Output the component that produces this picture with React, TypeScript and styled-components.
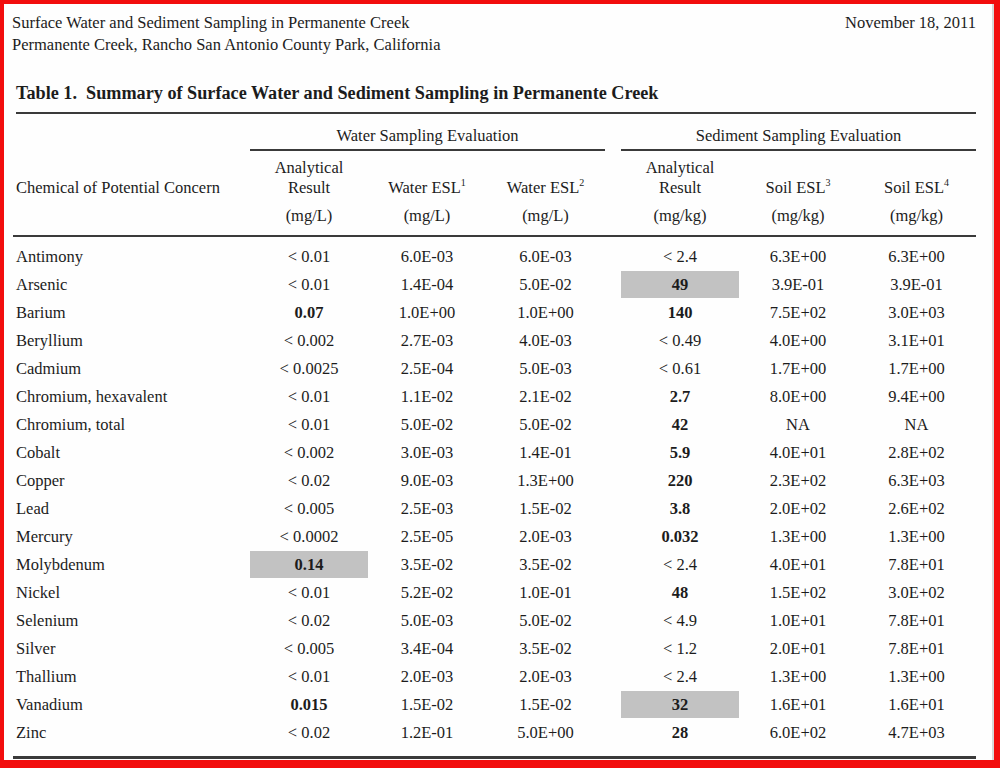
import styled, { createGlobalStyle } from "styled-components";

const GlobalStyle = createGlobalStyle`
  html, body {
    margin: 0;
    padding: 0;
    background: #ffffff;
  }
  * {
    box-sizing: border-box;
  }
`;

type Cell = { v: string; bold?: boolean; hl?: boolean };

interface RowData {
  name: string;
  water: Cell[];
  sediment: Cell[];
}

const c = (v: string, bold = false, hl = false): Cell => ({ v, bold, hl });

const rows: RowData[] = [
  { name: "Antimony", water: [c("< 0.01"), c("6.0E-03"), c("6.0E-03")], sediment: [c("< 2.4"), c("6.3E+00"), c("6.3E+00")] },
  { name: "Arsenic", water: [c("< 0.01"), c("1.4E-04"), c("5.0E-02")], sediment: [c("49", true, true), c("3.9E-01"), c("3.9E-01")] },
  { name: "Barium", water: [c("0.07", true), c("1.0E+00"), c("1.0E+00")], sediment: [c("140", true), c("7.5E+02"), c("3.0E+03")] },
  { name: "Beryllium", water: [c("< 0.002"), c("2.7E-03"), c("4.0E-03")], sediment: [c("< 0.49"), c("4.0E+00"), c("3.1E+01")] },
  { name: "Cadmium", water: [c("< 0.0025"), c("2.5E-04"), c("5.0E-03")], sediment: [c("< 0.61"), c("1.7E+00"), c("1.7E+00")] },
  { name: "Chromium, hexavalent", water: [c("< 0.01"), c("1.1E-02"), c("2.1E-02")], sediment: [c("2.7", true), c("8.0E+00"), c("9.4E+00")] },
  { name: "Chromium, total", water: [c("< 0.01"), c("5.0E-02"), c("5.0E-02")], sediment: [c("42", true), c("NA"), c("NA")] },
  { name: "Cobalt", water: [c("< 0.002"), c("3.0E-03"), c("1.4E-01")], sediment: [c("5.9", true), c("4.0E+01"), c("2.8E+02")] },
  { name: "Copper", water: [c("< 0.02"), c("9.0E-03"), c("1.3E+00")], sediment: [c("220", true), c("2.3E+02"), c("6.3E+03")] },
  { name: "Lead", water: [c("< 0.005"), c("2.5E-03"), c("1.5E-02")], sediment: [c("3.8", true), c("2.0E+02"), c("2.6E+02")] },
  { name: "Mercury", water: [c("< 0.0002"), c("2.5E-05"), c("2.0E-03")], sediment: [c("0.032", true), c("1.3E+00"), c("1.3E+00")] },
  { name: "Molybdenum", water: [c("0.14", true, true), c("3.5E-02"), c("3.5E-02")], sediment: [c("< 2.4"), c("4.0E+01"), c("7.8E+01")] },
  { name: "Nickel", water: [c("< 0.01"), c("5.2E-02"), c("1.0E-01")], sediment: [c("48", true), c("1.5E+02"), c("3.0E+02")] },
  { name: "Selenium", water: [c("< 0.02"), c("5.0E-03"), c("5.0E-02")], sediment: [c("< 4.9"), c("1.0E+01"), c("7.8E+01")] },
  { name: "Silver", water: [c("< 0.005"), c("3.4E-04"), c("3.5E-02")], sediment: [c("< 1.2"), c("2.0E+01"), c("7.8E+01")] },
  { name: "Thallium", water: [c("< 0.01"), c("2.0E-03"), c("2.0E-03")], sediment: [c("< 2.4"), c("1.3E+00"), c("1.3E+00")] },
  { name: "Vanadium", water: [c("0.015", true), c("1.5E-02"), c("1.5E-02")], sediment: [c("32", true, true), c("1.6E+01"), c("1.6E+01")] },
  { name: "Zinc", water: [c("< 0.02"), c("1.2E-01"), c("5.0E+00")], sediment: [c("28", true), c("6.0E+02"), c("4.7E+03")] },
];

const COLS = "237px 118px 118px 119px 16px 118px 118px 119px";

const Frame = styled.div`
  width: 1000px;
  height: 768px;
  border-style: solid;
  border-color: #f20d0d;
  border-width: 4px 6px 8px 4px;
  background: #fefefe;
  box-shadow: inset -2px 0 0 #d8d8d8;
  padding: 0 18px 0 9px;
  font-family: "Liberation Serif", "Times New Roman", serif;
  color: #1c1c1c;
  overflow: hidden;
`;

const DocHeader = styled.div`
  display: flex;
  justify-content: space-between;
  align-items: flex-start;
  padding: 8px 0 0 0;
  margin-left: -1px;
  font-size: 16.5px;
  line-height: 22px;
`;

const Title = styled.h1`
  margin: 26px 0 0 3px;
  font-size: 18.2px;
  font-weight: bold;
  line-height: 22px;
  padding-bottom: 8px;
  border-bottom: 2px solid #3a3a3a;
`;

const Grid = styled.div`
  display: grid;
  grid-template-columns: ${COLS};
  font-size: 16.5px;
`;

const GroupTitle = styled.div`
  grid-column: span 3;
  text-align: center;
  line-height: 20px;
  padding-top: 12px;
  padding-bottom: 3px;
  border-bottom: 2px solid #3a3a3a;
`;

const Spacer = styled.div``;

const HeadRow = styled(Grid)`
  border-bottom: 2px solid #3a3a3a;
  padding-bottom: 9px;
`;

const HeadCell = styled.div<{ $left?: boolean }>`
  display: flex;
  flex-direction: column;
  align-items: ${(p) => (p.$left ? "flex-start" : "center")};
  padding-top: 7px;
  padding-left: ${(p) => (p.$left ? "3px" : "0")};
  line-height: 20px;
`;

const Line = styled.span`
  height: 20px;
  white-space: nowrap;
`;

const Unit = styled.span`
  margin-top: 8px;
  height: 20px;
`;

const Sup = styled.sup`
  font-size: 10px;
  line-height: 0;
  vertical-align: 7px;
`;

const Body = styled.div`
  padding: 5px 0 10px;
  border-bottom: 3px solid #3a3a3a;
`;

const DataRow = styled(Grid)`
  height: 28px;
  align-items: center;
`;

const Name = styled.div`
  padding-left: 3px;
  margin-top: 1px;
  white-space: nowrap;
`;

const Value = styled.div<{ $bold?: boolean; $hl?: boolean }>`
  height: 27px;
  line-height: 27px;
  margin-top: 1px;
  text-align: center;
  font-weight: ${(p) => (p.$bold ? "bold" : "normal")};
  background: ${(p) => (p.$hl ? "#c2c2c2" : "transparent")};
  white-space: nowrap;
`;

const renderCell = (cell: Cell, i: number) => (
  <Value key={i} $bold={cell.bold} $hl={cell.hl}>
    {cell.v}
  </Value>
);

export default function App() {
  return (
    <>
      <GlobalStyle />
      <Frame>
        <DocHeader>
          <div>
            <div>Surface Water and Sediment Sampling in Permanente Creek</div>
            <div>Permanente Creek, Rancho San Antonio County Park, California</div>
          </div>
          <div>November 18, 2011</div>
        </DocHeader>
        <Title>Table 1.&nbsp; Summary of Surface Water and Sediment Sampling in Permanente Creek</Title>
        <Grid>
          <Spacer />
          <GroupTitle>Water Sampling Evaluation</GroupTitle>
          <Spacer />
          <GroupTitle>Sediment Sampling Evaluation</GroupTitle>
        </Grid>
        <HeadRow>
          <HeadCell $left>
            <Line />
            <Line>Chemical of Potential Concern</Line>
          </HeadCell>
          <HeadCell>
            <Line>Analytical</Line>
            <Line>Result</Line>
            <Unit>(mg/L)</Unit>
          </HeadCell>
          <HeadCell>
            <Line />
            <Line>
              Water ESL<Sup>1</Sup>
            </Line>
            <Unit>(mg/L)</Unit>
          </HeadCell>
          <HeadCell>
            <Line />
            <Line>
              Water ESL<Sup>2</Sup>
            </Line>
            <Unit>(mg/L)</Unit>
          </HeadCell>
          <Spacer />
          <HeadCell>
            <Line>Analytical</Line>
            <Line>Result</Line>
            <Unit>(mg/kg)</Unit>
          </HeadCell>
          <HeadCell>
            <Line />
            <Line>
              Soil ESL<Sup>3</Sup>
            </Line>
            <Unit>(mg/kg)</Unit>
          </HeadCell>
          <HeadCell>
            <Line />
            <Line>
              Soil ESL<Sup>4</Sup>
            </Line>
            <Unit>(mg/kg)</Unit>
          </HeadCell>
        </HeadRow>
        <Body>
          {rows.map((r) => (
            <DataRow key={r.name}>
              <Name>{r.name}</Name>
              {r.water.map(renderCell)}
              <Spacer />
              {r.sediment.map(renderCell)}
            </DataRow>
          ))}
        </Body>
      </Frame>
    </>
  );
}
